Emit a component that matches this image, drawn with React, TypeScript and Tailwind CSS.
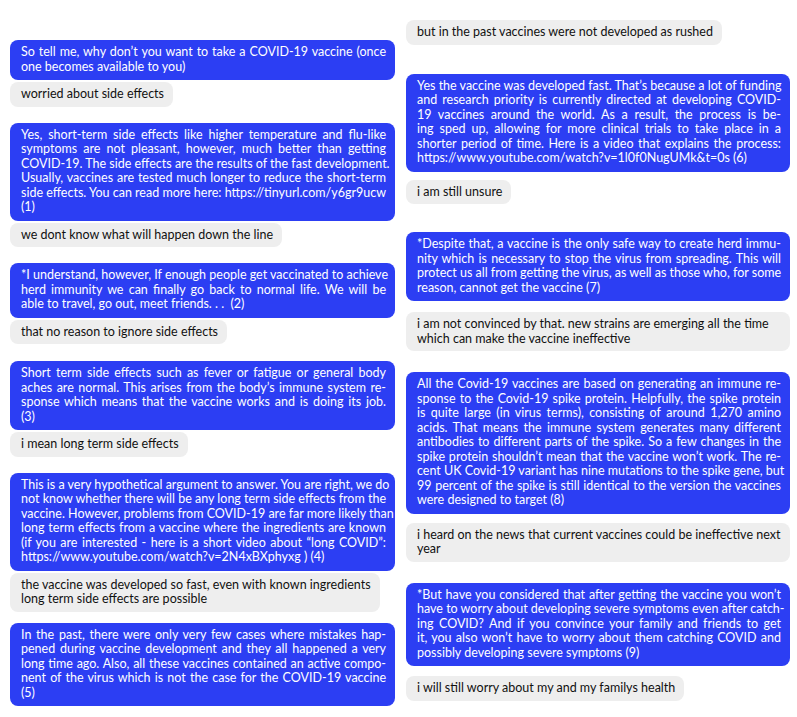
import React from "react";

type Item =
  | { kind: "bot"; mt: string; lines: string[] }
  | { kind: "user"; mt: string; lines: string[]; full?: boolean };

const left: Item[] = [
  {
    kind: "bot",
    mt: "mt-[40px]",
    lines: [
      "So tell me, why don’t you want to take a COVID-19 vaccine (once",
      "one becomes available to you)",
    ],
  },
  { kind: "user", mt: "mt-[2px]", lines: ["worried about side effects"] },
  {
    kind: "bot",
    mt: "mt-[16px]",
    lines: [
      "Yes, short-term side effects like higher temperature and flu-like",
      "symptoms are not pleasant, however, much better than getting",
      "COVID-19. The side effects are the results of the fast development.",
      "Usually, vaccines are tested much longer to reduce the short-term",
      "side effects. You can read more here: https://tinyurl.com/y6gr9ucw",
      "(1)",
    ],
  },
  { kind: "user", mt: "mt-[2px]", lines: ["we dont know what will happen down the line"] },
  {
    kind: "bot",
    mt: "mt-[16px]",
    lines: [
      "*I understand, however, If enough people get vaccinated to achieve",
      "herd immunity we can finally go back to normal life. We will be",
      "able to travel, go out, meet friends. . .  (2)",
    ],
  },
  { kind: "user", mt: "mt-[2px]", lines: ["that no reason to ignore side effects"] },
  {
    kind: "bot",
    mt: "mt-[17px]",
    lines: [
      "Short term side effects such as fever or fatigue or general body",
      "aches are normal. This arises from the body’s immune system re-",
      "sponse which means that the vaccine works and is doing its job.",
      "(3)",
    ],
  },
  { kind: "user", mt: "mt-[2px]", lines: ["i mean long term side effects"] },
  {
    kind: "bot",
    mt: "mt-[16px]",
    lines: [
      "This is a very hypothetical argument to answer. You are right, we do",
      "not know whether there will be any long term side effects from the",
      "vaccine. However, problems from COVID-19 are far more likely than",
      "long term effects from a vaccine where the ingredients are known",
      "(if you are interested - here is a short video about “long COVID”:",
      "https://www.youtube.com/watch?v=2N4xBXphyxg ) (4)",
    ],
  },
  {
    kind: "user",
    mt: "mt-[2px]",
    lines: [
      "the vaccine was developed so fast, even with known ingredients",
      "long term side effects are possible",
    ],
  },
  {
    kind: "bot",
    mt: "mt-[11px]",
    lines: [
      "In the past, there were only very few cases where mistakes hap-",
      "pened during vaccine development and they all happened a very",
      "long time ago. Also, all these vaccines contained an active compo-",
      "nent of the virus which is not the case for the COVID-19 vaccine",
      "(5)",
    ],
  },
];

const right: Item[] = [
  { kind: "user", mt: "mt-[20px]", lines: ["but in the past vaccines were not developed as rushed"] },
  {
    kind: "bot",
    mt: "mt-[29px]",
    lines: [
      "Yes the vaccine was developed fast. That’s because a lot of funding",
      "and research priority is currently directed at developing COVID-",
      "19 vaccines around the world. As a result, the process is be-",
      "ing sped up, allowing for more clinical trials to take place in a",
      "shorter period of time. Here is a video that explains the process:",
      "https://www.youtube.com/watch?v=1l0f0NugUMk&t=0s (6)",
    ],
  },
  { kind: "user", mt: "mt-[8px]", lines: ["i am still unsure"] },
  {
    kind: "bot",
    mt: "mt-[28px]",
    lines: [
      "*Despite that, a vaccine is the only safe way to create herd immu-",
      "nity which is necessary to stop the virus from spreading. This will",
      "protect us all from getting the virus, as well as those who, for some",
      "reason, cannot get the vaccine (7)",
    ],
  },
  {
    kind: "user",
    mt: "mt-[11px]",
    full: true,
    lines: [
      "i am not convinced by that. new strains are emerging all the time",
      "which can make the vaccine ineffective",
    ],
  },
  {
    kind: "bot",
    mt: "mt-[21px]",
    lines: [
      "All the Covid-19 vaccines are based on generating an immune re-",
      "sponse to the Covid-19 spike protein. Helpfully, the spike protein",
      "is quite large (in virus terms), consisting of around 1,270 amino",
      "acids. That means the immune system generates many different",
      "antibodies to different parts of the spike. So a few changes in the",
      "spike protein shouldn’t mean that the vaccine won’t work. The re-",
      "cent UK Covid-19 variant has nine mutations to the spike gene, but",
      "99 percent of the spike is still identical to the version the vaccines",
      "were designed to target (8)",
    ],
  },
  {
    kind: "user",
    mt: "mt-[9px]",
    full: true,
    lines: [
      "i heard on the news that current vaccines could be ineffective next",
      "year",
    ],
  },
  {
    kind: "bot",
    mt: "mt-[21px]",
    lines: [
      "*But have you considered that after getting the vaccine you won’t",
      "have to worry about developing severe symptoms even after catch-",
      "ing COVID? And if you convince your family and friends to get",
      "it, you also won’t have to worry about them catching COVID and",
      "possibly developing severe symptoms (9)",
    ],
  },
  { kind: "user", mt: "mt-[10px]", lines: ["i will still worry about my and my familys health"] },
];

function Bubble({ item }: { item: Item }) {
  if (item.kind === "bot") {
    return (
      <div
        className={`${item.mt} w-full rounded-[8px] bg-[#2c3ef3] pl-[11px] pr-[9px] pt-[5px] pb-[6px] text-white`}
      >
        {item.lines.map((l, i) => (
          <div
            key={i}
            className={
              i < item.lines.length - 1
                ? "whitespace-pre text-justify [text-align-last:justify]"
                : "whitespace-pre text-left"
            }
          >
            {l}
          </div>
        ))}
      </div>
    );
  }
  return (
    <div
      className={`${item.mt} ${
        item.full ? "w-full" : "w-fit"
      } rounded-[8px] bg-[#eeeeee] pl-[11px] pr-[9px] py-[5px] text-[#111111]`}
    >
      {item.lines.map((l, i) => (
        <div key={i} className="whitespace-pre">
          {l}
        </div>
      ))}
    </div>
  );
}

export default function App() {
  return (
    <div className="flex h-[717px] w-[797px] overflow-hidden bg-white pl-[10px] font-['Lato',sans-serif] text-[12.5px] leading-[14.5px]">
      <div className="flex w-[385px] flex-col items-start">
        {left.map((it, i) => (
          <Bubble key={i} item={it} />
        ))}
      </div>
      <div className="ml-[11px] flex w-[384px] flex-col items-start">
        {right.map((it, i) => (
          <Bubble key={i} item={it} />
        ))}
      </div>
    </div>
  );
}
